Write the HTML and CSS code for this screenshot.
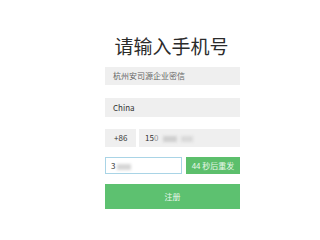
FILE: index.html
```html
<!DOCTYPE html>
<html>
<head>
<meta charset="utf-8">
<link rel="stylesheet" href="styles.css">
</head>
<body>
<div class="form">
  <h1 class="title">请输入手机号</h1>
  <div class="field f1">杭州安司源企业密信</div>
  <div class="field f2">China</div>
  <div class="row r3">
    <div class="field code">+86</div>
    <div class="field phone">15<span class="cut">0</span><span class="blur b1"></span><span class="blur b2"></span></div>
  </div>
  <div class="row r4">
    <div class="sms">3<span class="blur b3"></span></div>
    <div class="resend">44 秒后重发</div>
  </div>
  <div class="submit">注册</div>
</div>
</body>
</html>
```
FILE: styles.css
```css
html, body {
  margin: 0;
  padding: 0;
  background: #ffffff;
  width: 320px;
  height: 240px;
  overflow: hidden;
  font-family: "Noto Sans CJK SC", "Liberation Sans", sans-serif;
}
.form {
  width: 135px;
  margin-left: 105px;
  padding-top: 34px;
  display: flex;
  flex-direction: column;
}
.title {
  margin: 0;
  font-size: 19px;
  line-height: 24px;
  font-weight: 400;
  color: #2b2b2b;
  text-align: center;
  letter-spacing: 0;
  margin-left: 0;
  margin-right: 2px;
}
.field {
  background: #efefef;
  color: #555;
  font-size: 8px;
  height: 18px;
  line-height: 18px;
  padding-left: 8px;
  box-sizing: border-box;
  position: relative;
}
.f1 { margin-top: 9px; color: #666; }
.f2 { margin-top: 13px; height: 19px; line-height: 19px; color: #333; }
.row {
  display: flex;
  gap: 3px;
}
.r3 { margin-top: 12px; }
.code {
  width: 31px;
  color: #333;
  padding-left: 9px;
}
.phone {
  flex: 1;
  color: #333;
  padding-left: 6px;
}
.cut { color: #999; }
.blur {
  display: inline-block;
  background: #cfcfcf;
  filter: blur(1.5px);
  height: 6px;
  vertical-align: middle;
}
.b1 { width: 14px; margin-left: 5px; }
.b2 { width: 12px; margin-left: 4px; background: #d9d9d9; }
.b3 { width: 14px; margin-left: 2px; background: #d6d6d6; }
.r4 { margin-top: 10px; gap: 4px; }
.sms {
  width: 77px;
  height: 17px;
  box-sizing: border-box;
  border: 1px solid #a9d4e6;
  background: #fff;
  color: #333;
  font-size: 8px;
  line-height: 15px;
  padding-left: 5px;
}
.resend {
  flex: 1;
  height: 17px;
  background: #5cbf6c;
  color: #e8f7ea;
  font-size: 8px;
  line-height: 17px;
  text-align: center;
}
.submit {
  margin-top: 10px;
  height: 25px;
  background: #5dc170;
  color: #eaf7ec;
  font-size: 8px;
  line-height: 25px;
  text-align: center;
}
```
